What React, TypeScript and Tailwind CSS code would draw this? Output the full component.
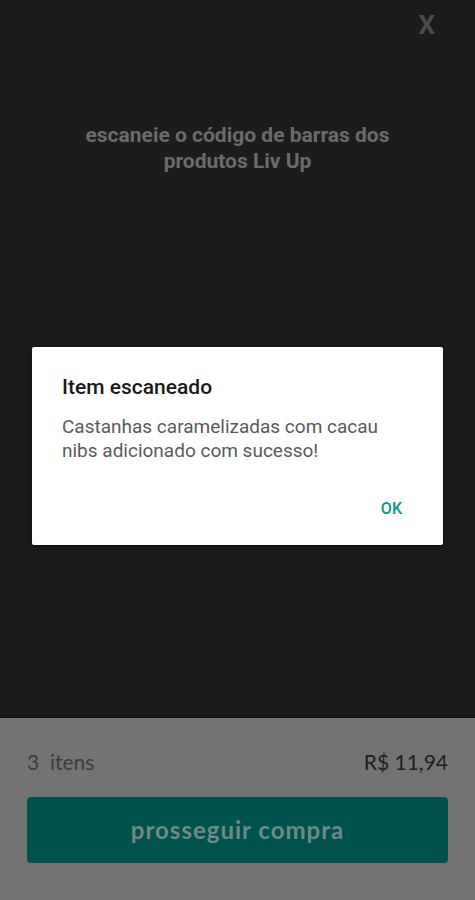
export default function App() {
  return (
    <div className="relative flex h-[900px] w-full flex-col overflow-hidden bg-[#1c1c1c]">
      {/* camera area (dimmed) */}
      <div className="flex flex-1 flex-col">
        <div className="flex justify-end pr-[40px] pt-[9px]">
          <span className="font-['Roboto',sans-serif] text-[26px] font-bold leading-[32px] text-[#4a4a4a]">X</span>
        </div>
        <p className="mt-[81px] text-center font-['Roboto',sans-serif] text-[21px] font-bold leading-[26px] text-[#6b6b6b]">
          escaneie o código de barras dos
          <br />
          produtos Liv Up
        </p>
      </div>

      {/* bottom sheet */}
      <div className="h-[183px] border-t border-[#141414] bg-[#737373] px-[27px] font-['Lato',sans-serif]">
        <div className="flex items-center justify-between pt-[31px]">
          <span className="whitespace-pre text-[21px] leading-[26px] text-[#3d3d3d]">3  itens</span>
          <span className="text-[21px] leading-[26px] text-[#1f1f1f]">R$ 11,94</span>
        </div>
        <button className="mt-[22px] flex h-[66px] w-full items-center justify-center rounded-[4px] bg-[#00524e] text-[24px] font-bold tracking-[1px] text-[#6f8986]">
          prosseguir compra
        </button>
      </div>

      {/* dialog */}
      <div className="absolute left-[32px] right-[32px] top-[347px] h-[198px] rounded-[2px] bg-white px-[30px] pt-[26px] font-['Roboto',sans-serif] shadow-[0_2px_6px_rgba(0,0,0,0.5)]">
        <h2 className="text-[21px] font-medium leading-[28px] text-[#1a1a1a]">Item escaneado</h2>
        <p className="mt-[14px] text-[19px] leading-[24px] text-[#5a5a5a]">
          Castanhas caramelizadas com cacau nibs adicionado com sucesso!
        </p>
        <div className="mt-[36px] flex justify-end pr-[11px]">
          <span className="text-[16px] font-medium leading-[20px] text-[#0e9688]">OK</span>
        </div>
      </div>
    </div>
  );
}
